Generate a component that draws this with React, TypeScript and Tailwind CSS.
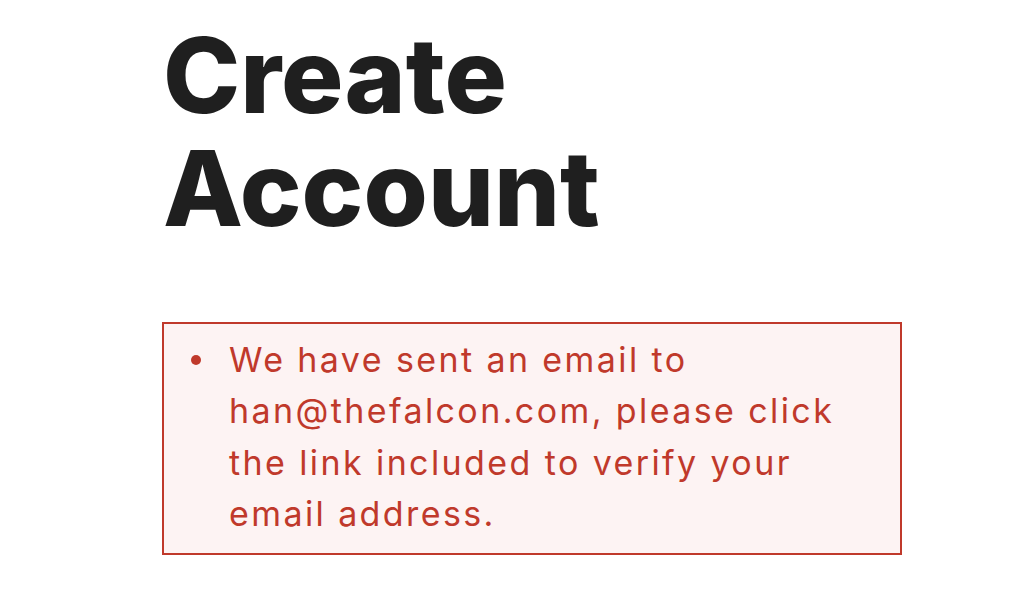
export default function App() {
  return (
    <div className="min-h-screen bg-white" style={{ fontFamily: "Inter, 'Noto Sans', sans-serif" }}>
      <div className="ml-[162px] w-[740px] pt-[19px]">
        <h1 className="text-[104px] leading-[113px] font-extrabold text-[#1f1f1f] tracking-[0px] pl-[1px]">
          Create
          <br />
          Account
        </h1>
        <div className="mt-[77px] border-2 border-[#c0392b] bg-[#fdf3f3] pl-[27px] pr-[20px] pt-[10px] pb-[14px]">
          <div className="flex items-start gap-[28px]">
            <span className="mt-[21px] h-[10px] w-[10px] shrink-0 rounded-full bg-[#c0392b]" />
            <p className="max-w-[622px] text-[34px] leading-[51.3px] text-[#c0392b] tracking-[2.4px]">
              We have sent an email to han@thefalcon.com, please click the link included to verify your email address.
            </p>
          </div>
        </div>
      </div>
    </div>
  );
}
